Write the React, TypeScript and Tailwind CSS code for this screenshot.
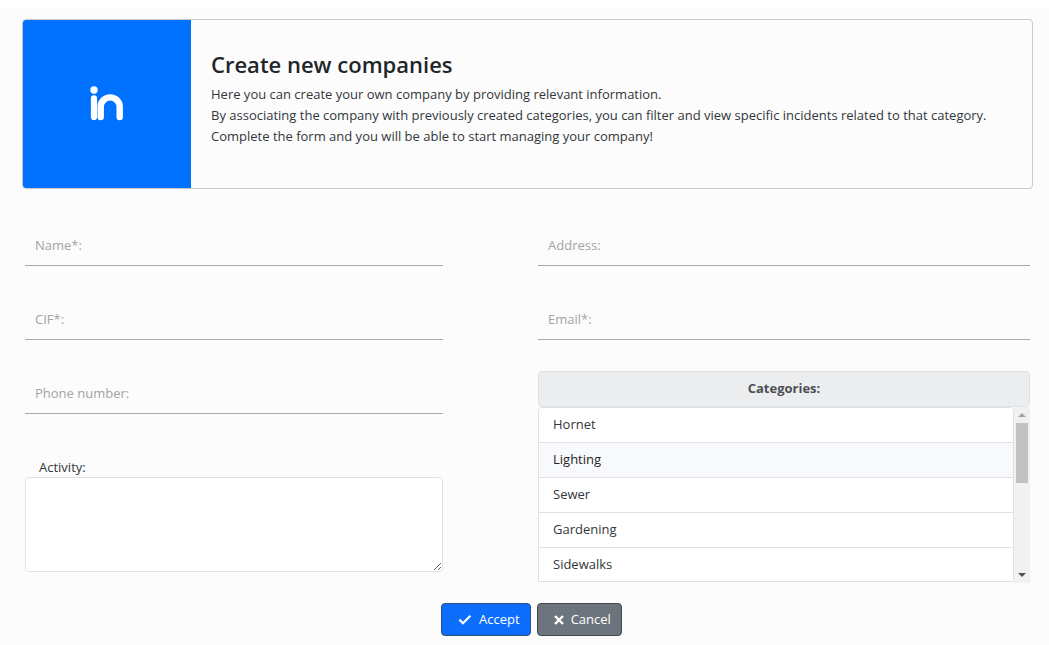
import React from "react";

const categories = ["Hornet", "Lighting", "Sewer", "Gardening", "Sidewalks"];

function Field({ id, label, type = "text" }: { id: string; label: string; type?: string }) {
  return (
    <input
      id={id}
      type={type}
      aria-label={label}
      placeholder={label}
      className="block h-[41px] w-full border-b border-[#a9a9a9] bg-transparent px-2.5 text-[13px] text-[#212529] outline-none placeholder:text-[#a3a3a3] focus:border-[#0d6efd]"
    />
  );
}

function Logo() {
  return (
    <svg viewBox="0 0 34 36" className="h-9 w-[34px]" fill="none" stroke="white" strokeLinecap="round" aria-hidden="true">
      <circle cx="4" cy="4" r="3.7" fill="white" stroke="none" />
      <path d="M4 12.4V31" strokeWidth="6.2" />
      <path d="M10.7 31V20.6a9.5 9.2 0 0 1 19 0V31" strokeWidth="6.4" />
    </svg>
  );
}

function ScrollBar() {
  return (
    <div aria-hidden="true" className="flex w-4 shrink-0 flex-col items-center bg-[#f1f1f1]">
      <div className="flex h-4 items-center">
        <svg viewBox="0 0 8 4" className="h-1 w-2" fill="#a3a3a3">
          <path d="M0 4L4 0L8 4Z" />
        </svg>
      </div>
      <div className="h-[60px] w-3 bg-[#c1c1c1]" />
      <div className="mt-auto flex h-4 items-center">
        <svg viewBox="0 0 8 4" className="h-1 w-2" fill="#505050">
          <path d="M0 0L4 4L8 0Z" />
        </svg>
      </div>
    </div>
  );
}

export default function App() {
  return (
    <div className="min-h-screen bg-white pt-2 pl-px font-['Open_Sans','Noto_Sans',sans-serif] text-[13px] text-[#212529]">
      <main className="min-h-[calc(100vh-8px)] bg-[#fcfcfc] pt-[11px] pr-4 pb-2 pl-[21px]">
        <section className="flex min-h-[170px] overflow-hidden rounded border border-[#c8cacc]">
          <div className="flex w-[168px] shrink-0 items-center justify-center bg-[#0072ff]">
            <Logo />
          </div>
          <div className="px-5 pt-[30px]">
            <h1 className="text-[22px] leading-7 font-semibold">Create new companies</h1>
            <p className="mt-1.5 leading-[21px] text-[#33373b]">
              Here you can create your own company by providing relevant information.
              <br />
              By associating the company with previously created categories, you can filter and view specific incidents related to that category.
              <br />
              Complete the form and you will be able to start managing your company!
            </p>
          </div>
        </section>

        <form className="mt-9" onSubmit={(e) => e.preventDefault()}>
          <div className="grid grid-cols-[418fr_492fr] gap-x-[95px] pr-[3px] pl-[3px]">
            <div>
              <div className="flex flex-col gap-[33px]">
                <Field id="name" label="Name*:" />
                <Field id="cif" label="CIF*:" />
                <Field id="phone" label="Phone number:" type="tel" />
              </div>
              <label htmlFor="activity" className="mt-[43px] block px-3.5 leading-5 text-[#33373b]">
                Activity:
              </label>
              <textarea
                id="activity"
                className="block h-[95px] w-full resize rounded border border-[#dee2e6] bg-white px-3 py-1.5 outline-none"
              />
            </div>

            <div>
              <div className="flex flex-col gap-[33px]">
                <Field id="address" label="Address:" />
                <Field id="email" label="Email*:" type="email" />
              </div>
              <h2
                id="categories-title"
                className="mt-[31px] flex h-9 items-center justify-center rounded border border-[#dee2e6] bg-[#ebedef] font-bold text-[#4b4f54]"
              >
                Categories:
              </h2>
              <div className="flex h-44">
                <ul aria-labelledby="categories-title" className="h-[175px] min-w-0 flex-1 overflow-hidden rounded-t border border-[#dee2e6]">
                  {categories.map((name) => (
                    <li key={name}>
                      <button
                        type="button"
                        className={
                          name === "Lighting"
                            ? "block h-[35px] w-full border-b border-[#dee2e6] bg-[#f8f9fb] px-3.5 text-left"
                            : "block h-[35px] w-full border-b border-[#dee2e6] bg-white px-3.5 text-left text-[#33373b]"
                        }
                      >
                        {name}
                      </button>
                    </li>
                  ))}
                </ul>
                <ScrollBar />
              </div>
            </div>
          </div>

          <div className="mt-5 flex justify-center gap-1.5 pl-2">
            <button
              type="submit"
              className="flex h-[33px] items-center gap-[7px] rounded border border-[#30507c] bg-[#0d6efd] pr-2.5 pl-4 text-white"
            >
              <svg viewBox="0 0 14 12" className="h-3 w-3.5" fill="none" stroke="currentColor" strokeWidth="2.2" aria-hidden="true">
                <path d="M1.4 5.6L5 9.2L12.4 1.8" />
              </svg>
              Accept
            </button>
            <button
              type="button"
              className="flex h-[33px] items-center gap-[7px] rounded border border-[#42484e] bg-[#6c757d] pr-2.5 pl-4 text-white"
            >
              <svg viewBox="0 0 10 10" className="size-2.5" fill="none" stroke="currentColor" strokeWidth="2.4" aria-hidden="true">
                <path d="M1 1L9 9M9 1L1 9" />
              </svg>
              Cancel
            </button>
          </div>
        </form>
      </main>
    </div>
  );
}
